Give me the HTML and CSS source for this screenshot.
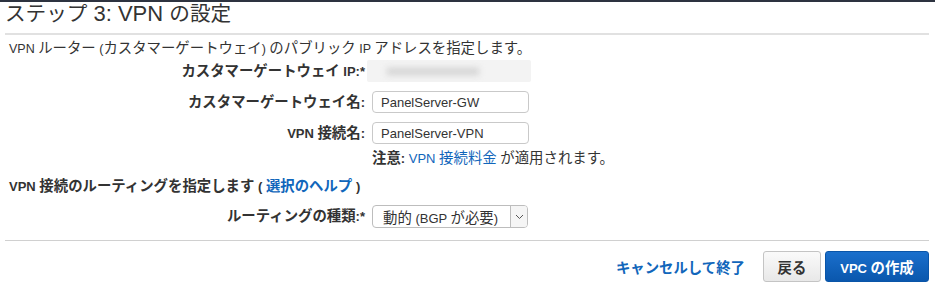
FILE: index.html
```html
<!DOCTYPE html>
<html lang="ja">
<head>
<meta charset="utf-8">
<link rel="stylesheet" href="styles.css">
</head>
<body>
<div class="topbar"></div>
<div class="page">
  <h1 class="title">ステップ<span class="en"> 3: VPN </span>の設定</h1>
  <div class="section">
    <p class="desc"><span class="en">VPN </span>ルーター<span class="en"> (</span>カスタマーゲートウェイ<span class="en">) </span>のパブリック<span class="en"> IP </span>アドレスを指定します。</p>
    <div class="form">
      <label class="lbl">カスタマーゲートウェイ<span class="en"> IP:*</span></label>
      <div class="field"><div class="blur"></div></div>
      <label class="lbl">カスタマーゲートウェイ名<span class="en">:</span></label>
      <div class="field"><input class="txt" type="text" value="PanelServer-GW"></div>
      <label class="lbl"><span class="en">VPN </span>接続名<span class="en">:</span></label>
      <div class="field"><input class="txt" type="text" value="PanelServer-VPN"></div>
      <div></div>
      <div class="note"><b>注意<span class="en">:</span></b><span class="en"> </span><a href="#"><span class="en">VPN </span>接続料金</a><span class="en"> </span>が適用されます。</div>
    </div>
    <div class="subhead"><span class="en">VPN </span>接続のルーティングを指定します<span class="en"> ( </span><a href="#">選択のヘルプ</a><span class="en"> )</span></div>
    <div class="form form2">
      <label class="lbl">ルーティングの種類<span class="en">:*</span></label>
      <div class="field">
        <div class="select"><span class="sel-text">動的<span class="en"> (BGP </span>が必要<span class="en">)</span></span><span class="sel-btn"><svg width="9" height="6" viewBox="0 0 9 6"><path d="M1 1 L4.5 4.5 L8 1" fill="none" stroke="#555" stroke-width="1"/></svg></span></div>
      </div>
    </div>
  </div>
  <div class="footer">
    <a href="#" class="cancel">キャンセルして終了</a>
    <button class="btn btn-back">戻る</button>
    <button class="btn btn-primary"><span class="en">VPC </span>の作成</button>
  </div>
</div>
</body>
</html>
```
FILE: styles.css
```css
* { box-sizing: border-box; }
body {
  margin: 0;
  font-family: "Liberation Sans", Arial, "Noto Sans CJK JP", sans-serif;
  color: #333;
  background: #fff;
  font-size: 14.4px;
}
.en { font-size: 12px; }
.topbar { height: 2px; background: #2d3340; }
.page { padding: 0 6px 0 5px; }
.title {
  margin: 0;
  font-size: 20.6px;
  font-weight: normal;
  line-height: 24px;
  color: #333;
  height: 31px;
}
.title .en { font-size: 22px; }
.section { border-top: 2px solid #e1e1e1; padding: 5px 4px 0 4px; }
.desc { margin: 0; line-height: 16px; font-size: 14.4px; }
.desc .en { font-size: 12.5px; }
.form {
  display: grid;
  grid-template-columns: 356px 1fr;
  column-gap: 7px;
  row-gap: 9px;
  align-items: center;
  margin-top: 3px;
}
.lbl { text-align: right; font-weight: bold; font-size: 14.4px; line-height: 17px; }
.lbl .en { font-size: 13px; }
.field { display: flex; align-items: center; }
.blur {
  width: 164px; height: 22px;
  background: #f3f3f3;
  position: relative;
  margin-left: -5px;
  border-radius: 2px;
}
.blur::after {
  content: "";
  position: absolute;
  left: 20px; top: 8px; width: 92px; height: 7px;
  background: #d2d2d2;
  filter: blur(3px);
}
.txt {
  width: 157px; height: 22px;
  border: 1px solid #c9c9c9;
  border-radius: 4px;
  padding: 0 8px;
  font: 13px "Liberation Sans", Arial, sans-serif;
  color: #333;
}
.note { margin-top: -3px; font-size: 14.4px; line-height: 17px; }
.note .en { font-size: 13px; }
a { color: #1166bb; text-decoration: none; }
.subhead { font-weight: bold; font-size: 14.4px; line-height: 17px; margin-top: 11px; }
.subhead .en { font-size: 13px; }
.form2 { margin-top: 10px; }
.select {
  width: 156px; height: 23px;
  border: 1px solid #bdbdbd;
  border-radius: 4px;
  display: flex;
  align-items: center;
  font-size: 14.4px;
  overflow: hidden;
}
.select .en { font-size: 13px; }
.sel-text { flex: 1; padding-left: 10px; white-space: nowrap; }
.sel-btn {
  width: 17px; height: 100%;
  border-left: 1px solid #bdbdbd;
  display: flex; align-items: center; justify-content: center;
  background: #f5f5f5;
}
.footer {
  border-top: 1px solid #d0d0d0;
  margin-top: 12px;
  padding-top: 10px;
  display: flex;
  justify-content: flex-end;
  align-items: center;
  gap: 4px;
}
.cancel { font-weight: bold; font-size: 14.4px; margin-right: 14px; }
.btn {
  height: 31px;
  border-radius: 3px;
  font: bold 14.4px "Liberation Sans", Arial, "Noto Sans CJK JP", sans-serif;
  padding: 0 8px;
}
.btn .en { font-size: 13px; }
.btn-back {
  background: linear-gradient(#fafafa, #e8e8e8);
  border: 1px solid #c4c4c4;
  color: #333;
  width: 58px;
}
.btn-primary {
  background: linear-gradient(#1a6fcc, #0a57ad);
  border: 1px solid #0a55a8;
  color: #fff;
  width: 104px;
}
```
